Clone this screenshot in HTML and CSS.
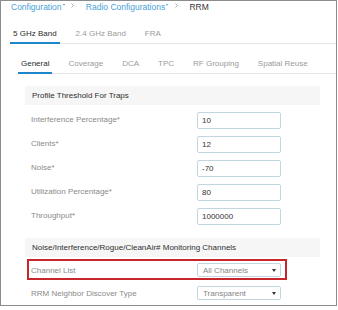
FILE: index.html
```html
<!DOCTYPE html>
<html lang="en">
<head>
  <meta charset="UTF-8" />
  <title>RRM - Radio Configurations</title>
  <link rel="stylesheet" href="styles.css">
</head>
<body>

  <div class="frame">
    <!-- Breadcrumb -->
    <div class="crumbs">
      <a class="crumb">Configuration<span class="caret"></span></a>
      <svg class="sep" width="3" height="5" viewBox="0 0 3 5"><path d="M0.5 0.5 L2.5 2.5 L0.5 4.5" fill="none" stroke="#9a9a9a" stroke-width="0.8"/></svg>
      <a class="crumb">Radio Configurations<span class="caret"></span></a>
      <svg class="sep" width="3" height="5" viewBox="0 0 3 5"><path d="M0.5 0.5 L2.5 2.5 L0.5 4.5" fill="none" stroke="#9a9a9a" stroke-width="0.8"/></svg>
      <span class="crumb-current">RRM</span>
    </div>

    <!-- Band tabs -->
    <ul class="tabs bands">
      <li class="tab active">5 GHz Band</li>
      <li class="tab">2.4 GHz Band</li>
      <li class="tab">FRA</li>
    </ul>

    <!-- Section tabs -->
    <ul class="tabs subtabs">
      <li class="tab active">General</li>
      <li class="tab">Coverage</li>
      <li class="tab">DCA</li>
      <li class="tab">TPC</li>
      <li class="tab">RF Grouping</li>
      <li class="tab">Spatial Reuse</li>
    </ul>

    <div class="panel">
      <div class="section-title">Profile Threshold For Traps</div>
      <div class="row">
        <label for="interference">Interference Percentage*</label>
        <input id="interference" type="text" value="10" />
      </div>
      <div class="row">
        <label for="clients">Clients*</label>
        <input id="clients" type="text" value="12" />
      </div>
      <div class="row">
        <label for="noise">Noise*</label>
        <input id="noise" type="text" value="-70" />
      </div>
      <div class="row">
        <label for="utilization">Utilization Percentage*</label>
        <input id="utilization" type="text" value="80" />
      </div>
      <div class="row">
        <label for="throughput">Throughput*</label>
        <input id="throughput" type="text" value="1000000" />
      </div>

      <div class="section-title second">Noise/Interference/Rogue/CleanAir# Monitoring Channels</div>
      <div class="row highlight">
        <label>Channel List</label>
        <div class="select"><span>All Channels</span><span class="arrow"></span></div>
      </div>
      <div class="row last">
        <label>RRM Neighbor Discover Type</label>
        <div class="select"><span>Transparent</span><span class="arrow"></span></div>
      </div>
    </div>
  </div>

</body>
</html>
```

FILE: styles.css
```css
body {
  margin: 0;
  font-family: 'Liberation Sans', Arial, sans-serif;
  background-color: #fff;
}

.frame {
  width: 335px;
  height: 304px;
  border: 1px solid #8c8c8c;
}

.crumbs {
  padding-left: 10px;
  height: 12px;
  line-height: 12px;
  font-size: 8.5px;
  white-space: nowrap;
}

.crumb {
  color: #4a9fd8;
}

.caret {
  display: inline-block;
  margin-left: 1px;
  border-left: 1.5px solid transparent;
  border-right: 1.5px solid transparent;
  border-top: 2px solid #4a9fd8;
  vertical-align: 4px;
}

.sep {
  margin: 0 9px 0 4.5px;
  vertical-align: 2px;
}

.crumb-current {
  color: #333;
}

.tabs {
  display: flex;
  gap: 13px;
  list-style: none;
  margin: 0;
  padding: 0;
  border-bottom: 1px solid #e6e6e6;
  font-size: 8px;
  line-height: 12px;
  color: #9a9a9a;
  white-space: nowrap;
}

.tab {
  padding: 0 3px 2px;
  border-bottom: 2px solid transparent;
  margin-bottom: -1px;
}

.tab.active {
  color: #2a2a2a;
  border-bottom-color: #1e87c9;
}

.bands {
  margin: 15px 0 0 9px;
}

.subtabs {
  margin: 14px 0 0 17px;
}

.panel {
  margin: 12px 16px 0 24px;
}

.section-title {
  background-color: #f6f6f6;
  height: 19px;
  line-height: 19px;
  padding-left: 7px;
  font-size: 8px;
  color: #2f2f2f;
  white-space: nowrap;
}

.section-title.second {
  margin-top: 13px;
}

.row {
  display: flex;
  align-items: flex-start;
  justify-content: space-between;
  margin-top: 7px;
  padding: 0 39px 0 6px;
}

label {
  font-size: 8px;
  line-height: 12px;
  padding-top: 1.5px;
  color: #8a8a8a;
}

input {
  width: 84px;
  height: 17px;
  box-sizing: border-box;
  margin: 0;
  padding: 0 4px;
  border: 1px solid #c2d6e2;
  border-radius: 2px;
  font-family: 'Liberation Sans', Arial, sans-serif;
  font-size: 8px;
  color: #333;
}

.row.highlight {
  margin: 2px 33px 0 2px;
  padding: 2px 4px 1px 2px;
  border: 2px solid #c8262d;
}

.row.last {
  margin-top: 6px;
}

.select {
  width: 84px;
  height: 14px;
  box-sizing: border-box;
  display: flex;
  align-items: center;
  justify-content: space-between;
  padding: 0 4px 0 5px;
  border: 1px solid #c2d6e2;
  border-radius: 2px;
  font-size: 8px;
  color: #858585;
}

.arrow {
  border-left: 2px solid transparent;
  border-right: 2px solid transparent;
  border-top: 3px solid #333;
}
```
